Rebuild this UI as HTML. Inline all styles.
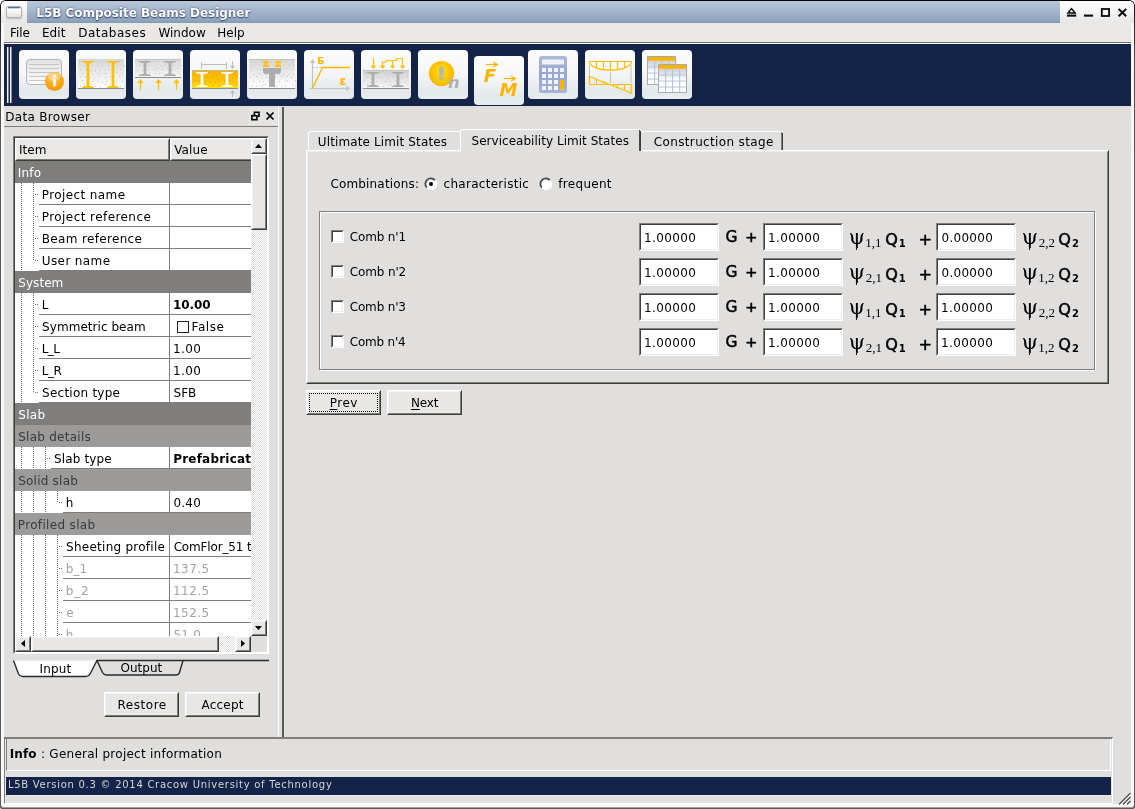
<!DOCTYPE html>
<html><head><meta charset="utf-8"><title>L5B Composite Beams Designer</title>
<style>
*{box-sizing:border-box;margin:0;padding:0}
html,body{width:1135px;height:809px;overflow:hidden;background:#fff}
body{font-family:"DejaVu Sans","Liberation Sans",sans-serif;font-size:12px;color:#000;position:relative}
.a{position:absolute}
.t{position:absolute;white-space:nowrap;line-height:14px;height:14px}
.b{font-weight:bold}
svg{position:absolute;overflow:visible}
</style></head>
<body>
<div id="w" class="a" style="left:0;top:0;width:1135px;height:809px;will-change:transform">
<div class="a" style="left:0px;top:0px;width:1135px;height:809px;background:linear-gradient(#000 0,#1c1c1c 12px,#4a4a4a 60px,#5a5a5a 160px,#5a5a5a 100%);border-radius:6px 6px 2px 2px"></div>
<div class="a" style="left:1px;top:1px;width:1133px;height:806px;background:#f8f8f8;border-radius:5px 5px 2px 2px"></div>
<div class="a" style="left:2px;top:807px;width:1131px;height:1px;background:#a0a0a0"></div>
<div class="a" style="left:4px;top:23px;width:1127px;height:781px;background:#e0dfde"></div>
<div class="a" style="left:1px;top:1px;width:1133px;height:22px;background:linear-gradient(#fdfdfd,#f4f4f4 50%,#e6e6e5);border-radius:5px 5px 0 0"></div>
<div class="a" style="left:27px;top:1px;width:1033px;height:22px;background:linear-gradient(#b9c8da,#8fa3bf 90%,#8498b4)"></div>
<div class="a" style="left:6px;top:6px;width:16px;height:12px;background:linear-gradient(#fff 25%,#dfe2dc);border:1px solid #b0b0b0;border-radius:2px;box-shadow:0 1px 2px rgba(0,0,0,.22)"></div>
<div class="a" style="left:8px;top:7px;width:12px;height:1px;background:#4f74ad"></div>
<div class="a" style="left:8px;top:8px;width:12px;height:1px;background:#c5d3ea"></div>
<div class="t" style="left:36.29px;top:5.85px;font-weight:bold;letter-spacing:-0.027px;color:#fff;text-shadow:0 0 2px #3a4d6e,0 1px 1px #3a4d6e">L5B Composite Beams Designer</div>
<svg style="left:1064px;top:3px" width="70" height="18" viewBox="0 0 70 18"><g fill="none" stroke="#0c0c0c">
<path d="M4 10 L7.550 5.600 L11.100 10 Z" stroke-width="1.500"/><path d="M2.900 12.600 H12.200" stroke-width="2.100"/>
<path d="M19.900 12.600 H29.100" stroke-width="2.100"/>
<rect x="37.800" y="6" width="7.300" height="7" stroke-width="1.800"/>
<path d="M54.600 5.900 L62.200 13.200 M62.200 5.900 L54.600 13.200" stroke-width="2"/></g></svg>
<div class="a" style="left:4px;top:23px;width:1127px;height:19px;background:#e9e8e6"></div>
<div class="t" style="left:9.93px;top:25.85px;letter-spacing:-0.025px;">File</div>
<div class="t" style="left:41.93px;top:25.85px;letter-spacing:0.072px;">Edit</div>
<div class="t" style="left:78.23px;top:25.85px;letter-spacing:0.493px;">Databases</div>
<div class="t" style="left:158.39px;top:25.85px;">Window</div>
<div class="t" style="left:217.13px;top:25.85px;letter-spacing:0.054px;">Help</div>
<div class="a" style="left:4px;top:42px;width:1127px;height:1px;background:#6e6d6c"></div>
<div class="a" style="left:4px;top:43px;width:1127px;height:1px;background:#fff"></div>
<div class="a" style="left:4px;top:44px;width:1127px;height:62px;background:#142448"></div>
<div class="a" style="left:7px;top:47px;width:2px;height:56px;background:#f4f4f4;border-right:1px solid #8a8a8a"></div>
<div class="a" style="left:10px;top:47px;width:2px;height:56px;background:#f4f4f4;border-right:1px solid #8a8a8a"></div>
<div class="a" style="left:19px;top:50px;width:50px;height:49px;background:linear-gradient(#fcfcfc,#f4f5f6 50%,#e3e9eb 82%,#e7ecee);border-radius:4px"></div>
<svg style="left:19px;top:50px" width="50" height="49" viewBox="0 0 50 49"><defs><linearGradient id="cg" x1="0" y1="0" x2="0" y2="1"><stop offset="0" stop-color="#e2e2e2"/><stop offset="1" stop-color="#fbfbfb"/></linearGradient>
<radialGradient id="og" cx="0.45" cy="0.3" r="0.75"><stop offset="0" stop-color="#ffd27a"/><stop offset="0.55" stop-color="#ffa915"/><stop offset="1" stop-color="#f39200"/></radialGradient></defs>
<rect x="7.500" y="9.500" width="35" height="25" rx="3.500" fill="url(#cg)" stroke="#b4b4b4"/>
<path d="M10 14.500 H40 M10 18.500 H40 M10 22.500 H40 M10 26.500 H40 M10 30.500 H32" stroke="#c6c6c6" stroke-width="1"/>
<circle cx="35.500" cy="31.500" r="9.500" fill="url(#og)"/>
<ellipse cx="35.500" cy="26.500" rx="7" ry="4" fill="#fff" opacity="0.28"/>
<circle cx="35.500" cy="26.300" r="1.500" fill="#fff"/><rect x="34.100" y="28.800" width="2.800" height="7.700" rx="0.800" fill="#fff"/></svg>
<div class="a" style="left:76px;top:50px;width:50px;height:49px;background:linear-gradient(#fcfcfc,#f4f5f6 50%,#e3e9eb 82%,#e7ecee);border-radius:4px"></div>
<svg style="left:76px;top:50px" width="50" height="49" viewBox="0 0 50 49"><defs><linearGradient id="s1" x1="0" y1="0" x2="0" y2="1"><stop offset="0" stop-color="#d6d6d6"/><stop offset="1" stop-color="#ffffff"/></linearGradient></defs><rect x="2" y="9" width="46" height="29" fill="url(#s1)"/><rect x="3" y="10" width="1" height="1" fill="#c4c4c4"/><rect x="8" y="11" width="1" height="1" fill="#c4c4c4"/><rect x="14" y="11" width="1" height="1" fill="#c4c4c4"/><rect x="19" y="11" width="1" height="1" fill="#c4c4c4"/><rect x="23" y="11" width="1" height="1" fill="#c4c4c4"/><rect x="30" y="12" width="1" height="1" fill="#c4c4c4"/><rect x="34" y="12" width="1" height="1" fill="#c4c4c4"/><rect x="39" y="10" width="1" height="1" fill="#c4c4c4"/><rect x="43" y="11" width="1" height="1" fill="#c4c4c4"/><rect x="8" y="15" width="1" height="1" fill="#c4c4c4"/><rect x="12" y="16" width="1" height="1" fill="#c4c4c4"/><rect x="16" y="15" width="1" height="1" fill="#c4c4c4"/><rect x="22" y="15" width="1" height="1" fill="#c4c4c4"/><rect x="26" y="15" width="1" height="1" fill="#c4c4c4"/><rect x="32" y="15" width="1" height="1" fill="#c4c4c4"/><rect x="36" y="15" width="1" height="1" fill="#c4c4c4"/><rect x="42" y="16" width="1" height="1" fill="#c4c4c4"/><rect x="48" y="15" width="1" height="1" fill="#c4c4c4"/><rect x="4" y="19" width="1" height="1" fill="#c4c4c4"/><rect x="10" y="19" width="1" height="1" fill="#c4c4c4"/><rect x="15" y="20" width="1" height="1" fill="#c4c4c4"/><rect x="19" y="20" width="1" height="1" fill="#c4c4c4"/><rect x="24" y="20" width="1" height="1" fill="#c4c4c4"/><rect x="29" y="20" width="1" height="1" fill="#c4c4c4"/><rect x="35" y="19" width="1" height="1" fill="#c4c4c4"/><rect x="40" y="20" width="1" height="1" fill="#c4c4c4"/><rect x="44" y="19" width="1" height="1" fill="#c4c4c4"/><rect x="6" y="23" width="1" height="1" fill="#c4c4c4"/><rect x="12" y="23" width="1" height="1" fill="#c4c4c4"/><rect x="16" y="24" width="1" height="1" fill="#c4c4c4"/><rect x="22" y="23" width="1" height="1" fill="#c4c4c4"/><rect x="28" y="23" width="1" height="1" fill="#c4c4c4"/><rect x="30" y="23" width="1" height="1" fill="#c4c4c4"/><rect x="36" y="23" width="1" height="1" fill="#c4c4c4"/><rect x="40" y="22" width="1" height="1" fill="#c4c4c4"/><rect x="46" y="23" width="1" height="1" fill="#c4c4c4"/><rect x="4" y="26" width="1" height="1" fill="#c4c4c4"/><rect x="9" y="27" width="1" height="1" fill="#c4c4c4"/><rect x="14" y="27" width="1" height="1" fill="#c4c4c4"/><rect x="18" y="28" width="1" height="1" fill="#c4c4c4"/><rect x="23" y="26" width="1" height="1" fill="#c4c4c4"/><rect x="29" y="27" width="1" height="1" fill="#c4c4c4"/><rect x="34" y="27" width="1" height="1" fill="#c4c4c4"/><rect x="38" y="26" width="1" height="1" fill="#c4c4c4"/><rect x="43" y="26" width="1" height="1" fill="#c4c4c4"/><rect x="6" y="30" width="1" height="1" fill="#c4c4c4"/><rect x="10" y="31" width="1" height="1" fill="#c4c4c4"/><rect x="16" y="31" width="1" height="1" fill="#c4c4c4"/><rect x="22" y="31" width="1" height="1" fill="#c4c4c4"/><rect x="26" y="32" width="1" height="1" fill="#c4c4c4"/><rect x="30" y="31" width="1" height="1" fill="#c4c4c4"/><rect x="36" y="30" width="1" height="1" fill="#c4c4c4"/><rect x="40" y="31" width="1" height="1" fill="#c4c4c4"/><rect x="46" y="31" width="1" height="1" fill="#c4c4c4"/><rect x="4" y="36" width="1" height="1" fill="#c4c4c4"/><rect x="8" y="35" width="1" height="1" fill="#c4c4c4"/><rect x="15" y="34" width="1" height="1" fill="#c4c4c4"/><rect x="19" y="36" width="1" height="1" fill="#c4c4c4"/><rect x="24" y="36" width="1" height="1" fill="#c4c4c4"/><rect x="29" y="34" width="1" height="1" fill="#c4c4c4"/><rect x="34" y="34" width="1" height="1" fill="#c4c4c4"/><rect x="38" y="36" width="1" height="1" fill="#c4c4c4"/><rect x="44" y="36" width="1" height="1" fill="#c4c4c4"/><path d="M6 11 H18 V11.96 L14.60 13.00 H13.40 V36.00 H14.60 L18 37.04 V38 H6 V37.04 L9.40 36.00 H10.60 V13.00 H9.40 L6 11.96 Z" fill="#ffc000"/><path d="M31 11 H43 V11.96 L39.60 13.00 H38.40 V36.00 H39.60 L43 37.04 V38 H31 V37.04 L34.40 36.00 H35.60 V13.00 H34.40 L31 11.96 Z" fill="#ffc000"/><rect x="2" y="38" width="46" height="1" fill="#8c8c8c"/></svg>
<div class="a" style="left:133px;top:50px;width:50px;height:49px;background:linear-gradient(#fcfcfc,#f4f5f6 50%,#e3e9eb 82%,#e7ecee);border-radius:4px"></div>
<svg style="left:133px;top:50px" width="50" height="49" viewBox="0 0 50 49"><defs><linearGradient id="s2" x1="0" y1="0" x2="0" y2="1"><stop offset="0" stop-color="#d8d8d8"/><stop offset="1" stop-color="#f4f4f4"/></linearGradient></defs><rect x="2" y="9" width="46" height="18" fill="url(#s2)"/><rect x="2" y="9" width="46" height="1" fill="#c4c4c4"/><rect x="4" y="11" width="1" height="1" fill="#c4c4c4"/><rect x="9" y="12" width="1" height="1" fill="#c4c4c4"/><rect x="13" y="10" width="1" height="1" fill="#c4c4c4"/><rect x="20" y="11" width="1" height="1" fill="#c4c4c4"/><rect x="24" y="11" width="1" height="1" fill="#c4c4c4"/><rect x="30" y="12" width="1" height="1" fill="#c4c4c4"/><rect x="35" y="11" width="1" height="1" fill="#c4c4c4"/><rect x="39" y="11" width="1" height="1" fill="#c4c4c4"/><rect x="45" y="10" width="1" height="1" fill="#c4c4c4"/><rect x="6" y="15" width="1" height="1" fill="#c4c4c4"/><rect x="10" y="15" width="1" height="1" fill="#c4c4c4"/><rect x="16" y="15" width="1" height="1" fill="#c4c4c4"/><rect x="22" y="16" width="1" height="1" fill="#c4c4c4"/><rect x="28" y="16" width="1" height="1" fill="#c4c4c4"/><rect x="32" y="15" width="1" height="1" fill="#c4c4c4"/><rect x="36" y="14" width="1" height="1" fill="#c4c4c4"/><rect x="40" y="15" width="1" height="1" fill="#c4c4c4"/><rect x="48" y="15" width="1" height="1" fill="#c4c4c4"/><rect x="4" y="20" width="1" height="1" fill="#c4c4c4"/><rect x="9" y="20" width="1" height="1" fill="#c4c4c4"/><rect x="15" y="19" width="1" height="1" fill="#c4c4c4"/><rect x="20" y="19" width="1" height="1" fill="#c4c4c4"/><rect x="24" y="18" width="1" height="1" fill="#c4c4c4"/><rect x="29" y="19" width="1" height="1" fill="#c4c4c4"/><rect x="34" y="18" width="1" height="1" fill="#c4c4c4"/><rect x="39" y="19" width="1" height="1" fill="#c4c4c4"/><rect x="44" y="18" width="1" height="1" fill="#c4c4c4"/><rect x="6" y="24" width="1" height="1" fill="#c4c4c4"/><rect x="12" y="22" width="1" height="1" fill="#c4c4c4"/><rect x="16" y="22" width="1" height="1" fill="#c4c4c4"/><rect x="22" y="23" width="1" height="1" fill="#c4c4c4"/><rect x="26" y="23" width="1" height="1" fill="#c4c4c4"/><rect x="32" y="24" width="1" height="1" fill="#c4c4c4"/><rect x="36" y="22" width="1" height="1" fill="#c4c4c4"/><rect x="40" y="24" width="1" height="1" fill="#c4c4c4"/><rect x="46" y="23" width="1" height="1" fill="#c4c4c4"/><path d="M6 11 H18 V11.96 L14.60 13.00 H13.40 V24.00 H14.60 L18 25.04 V26 H6 V25.04 L9.40 24.00 H10.60 V13.00 H9.40 L6 11.96 Z" fill="#aeaeae"/><path d="M31 11 H43 V11.96 L39.60 13.00 H38.40 V24.00 H39.60 L43 25.04 V26 H31 V25.04 L34.40 24.00 H35.60 V13.00 H34.40 L31 11.96 Z" fill="#aeaeae"/><rect x="2" y="27" width="46" height="1" fill="#8c8c8c"/><path d="M7.5 40 V30" stroke="#ffc000" stroke-width="1.3" fill="none"/><path d="M4.3 33 L7.5 29 L10.7 33 Z" fill="#ffc000"/><path d="M25.5 40 V30" stroke="#ffc000" stroke-width="1.3" fill="none"/><path d="M22.3 33 L25.5 29 L28.7 33 Z" fill="#ffc000"/><path d="M43.5 40 V30" stroke="#ffc000" stroke-width="1.3" fill="none"/><path d="M40.3 33 L43.5 29 L46.7 33 Z" fill="#ffc000"/></svg>
<div class="a" style="left:190px;top:50px;width:50px;height:49px;background:linear-gradient(#fcfcfc,#f4f5f6 50%,#e3e9eb 82%,#e7ecee);border-radius:4px"></div>
<svg style="left:190px;top:50px" width="50" height="49" viewBox="0 0 50 49"><defs><linearGradient id="s3" x1="0" y1="0" x2="0" y2="1"><stop offset="0" stop-color="#ffb200"/><stop offset="0.6" stop-color="#ffc400"/><stop offset="1" stop-color="#ffe000"/></linearGradient></defs>
<rect x="2" y="21" width="46" height="17" fill="url(#s3)"/><rect x="2" y="20" width="46" height="1" fill="#b8b8b8"/><rect x="2" y="38" width="46" height="1" fill="#8c8c8c"/><rect x="4" y="23" width="1" height="1" fill="#dba000"/><rect x="8" y="24" width="1" height="1" fill="#dba000"/><rect x="15" y="23" width="1" height="1" fill="#dba000"/><rect x="18" y="22" width="1" height="1" fill="#dba000"/><rect x="23" y="24" width="1" height="1" fill="#dba000"/><rect x="29" y="22" width="1" height="1" fill="#dba000"/><rect x="34" y="23" width="1" height="1" fill="#dba000"/><rect x="39" y="23" width="1" height="1" fill="#dba000"/><rect x="43" y="23" width="1" height="1" fill="#dba000"/><rect x="6" y="26" width="1" height="1" fill="#dba000"/><rect x="12" y="27" width="1" height="1" fill="#dba000"/><rect x="16" y="27" width="1" height="1" fill="#dba000"/><rect x="22" y="27" width="1" height="1" fill="#dba000"/><rect x="26" y="26" width="1" height="1" fill="#dba000"/><rect x="32" y="28" width="1" height="1" fill="#dba000"/><rect x="36" y="27" width="1" height="1" fill="#dba000"/><rect x="42" y="28" width="1" height="1" fill="#dba000"/><rect x="46" y="26" width="1" height="1" fill="#dba000"/><rect x="4" y="30" width="1" height="1" fill="#dba000"/><rect x="9" y="31" width="1" height="1" fill="#dba000"/><rect x="14" y="32" width="1" height="1" fill="#dba000"/><rect x="20" y="31" width="1" height="1" fill="#dba000"/><rect x="25" y="32" width="1" height="1" fill="#dba000"/><rect x="29" y="31" width="1" height="1" fill="#dba000"/><rect x="34" y="31" width="1" height="1" fill="#dba000"/><rect x="38" y="30" width="1" height="1" fill="#dba000"/><rect x="43" y="32" width="1" height="1" fill="#dba000"/><rect x="6" y="36" width="1" height="1" fill="#dba000"/><rect x="12" y="35" width="1" height="1" fill="#dba000"/><rect x="16" y="34" width="1" height="1" fill="#dba000"/><rect x="22" y="35" width="1" height="1" fill="#dba000"/><rect x="28" y="35" width="1" height="1" fill="#dba000"/><rect x="32" y="35" width="1" height="1" fill="#dba000"/><rect x="38" y="35" width="1" height="1" fill="#dba000"/><rect x="42" y="35" width="1" height="1" fill="#dba000"/><rect x="46" y="34" width="1" height="1" fill="#dba000"/><path d="M6 22 H18 V22.96 L14.60 24.00 H13.40 V35.00 H14.60 L18 36.04 V37 H6 V36.04 L9.40 35.00 H10.60 V24.00 H9.40 L6 22.96 Z" fill="#fff"/><path d="M31 22 H43 V22.96 L39.60 24.00 H38.40 V35.00 H39.60 L43 36.04 V37 H31 V36.04 L34.40 35.00 H35.60 V24.00 H34.40 L31 22.96 Z" fill="#fff"/><path d="M11.500 12 V19 M36.500 12 V19 M11.500 14.500 H36.500" stroke="#bdbdbd" stroke-width="1" fill="none"/><path d="M42.5 11 V18" stroke="#bdbdbd" stroke-width="1" fill="none"/><path d="M39.9 15.8 L42.5 19 L45.1 15.8 Z" fill="#bdbdbd"/><path d="M42.5 47 V41" stroke="#bdbdbd" stroke-width="1" fill="none"/><path d="M39.9 43.2 L42.5 40 L45.1 43.2 Z" fill="#bdbdbd"/></svg>
<div class="a" style="left:247px;top:50px;width:50px;height:49px;background:linear-gradient(#fcfcfc,#f4f5f6 50%,#e3e9eb 82%,#e7ecee);border-radius:4px"></div>
<svg style="left:247px;top:50px" width="50" height="49" viewBox="0 0 50 49"><defs><linearGradient id="s4" x1="0" y1="0" x2="0" y2="1"><stop offset="0" stop-color="#d6d6d6"/><stop offset="1" stop-color="#ffffff"/></linearGradient></defs><rect x="2" y="9" width="46" height="29" fill="url(#s4)"/><rect x="2" y="9" width="46" height="1" fill="#c4c4c4"/><rect x="4" y="11" width="1" height="1" fill="#c4c4c4"/><rect x="8" y="12" width="1" height="1" fill="#c4c4c4"/><rect x="14" y="10" width="1" height="1" fill="#c4c4c4"/><rect x="19" y="10" width="1" height="1" fill="#c4c4c4"/><rect x="24" y="12" width="1" height="1" fill="#c4c4c4"/><rect x="29" y="12" width="1" height="1" fill="#c4c4c4"/><rect x="33" y="11" width="1" height="1" fill="#c4c4c4"/><rect x="38" y="11" width="1" height="1" fill="#c4c4c4"/><rect x="45" y="11" width="1" height="1" fill="#c4c4c4"/><rect x="6" y="16" width="1" height="1" fill="#c4c4c4"/><rect x="12" y="14" width="1" height="1" fill="#c4c4c4"/><rect x="16" y="16" width="1" height="1" fill="#c4c4c4"/><rect x="22" y="15" width="1" height="1" fill="#c4c4c4"/><rect x="26" y="14" width="1" height="1" fill="#c4c4c4"/><rect x="32" y="15" width="1" height="1" fill="#c4c4c4"/><rect x="36" y="15" width="1" height="1" fill="#c4c4c4"/><rect x="42" y="15" width="1" height="1" fill="#c4c4c4"/><rect x="46" y="15" width="1" height="1" fill="#c4c4c4"/><rect x="4" y="19" width="1" height="1" fill="#c4c4c4"/><rect x="10" y="19" width="1" height="1" fill="#c4c4c4"/><rect x="13" y="19" width="1" height="1" fill="#c4c4c4"/><rect x="20" y="19" width="1" height="1" fill="#c4c4c4"/><rect x="24" y="19" width="1" height="1" fill="#c4c4c4"/><rect x="28" y="19" width="1" height="1" fill="#c4c4c4"/><rect x="34" y="18" width="1" height="1" fill="#c4c4c4"/><rect x="39" y="18" width="1" height="1" fill="#c4c4c4"/><rect x="44" y="19" width="1" height="1" fill="#c4c4c4"/><rect x="6" y="24" width="1" height="1" fill="#c4c4c4"/><rect x="12" y="23" width="1" height="1" fill="#c4c4c4"/><rect x="18" y="24" width="1" height="1" fill="#c4c4c4"/><rect x="22" y="22" width="1" height="1" fill="#c4c4c4"/><rect x="26" y="22" width="1" height="1" fill="#c4c4c4"/><rect x="32" y="24" width="1" height="1" fill="#c4c4c4"/><rect x="36" y="24" width="1" height="1" fill="#c4c4c4"/><rect x="42" y="24" width="1" height="1" fill="#c4c4c4"/><rect x="46" y="24" width="1" height="1" fill="#c4c4c4"/><rect x="3" y="27" width="1" height="1" fill="#c4c4c4"/><rect x="9" y="26" width="1" height="1" fill="#c4c4c4"/><rect x="14" y="28" width="1" height="1" fill="#c4c4c4"/><rect x="19" y="27" width="1" height="1" fill="#c4c4c4"/><rect x="24" y="28" width="1" height="1" fill="#c4c4c4"/><rect x="28" y="27" width="1" height="1" fill="#c4c4c4"/><rect x="34" y="26" width="1" height="1" fill="#c4c4c4"/><rect x="40" y="26" width="1" height="1" fill="#c4c4c4"/><rect x="44" y="27" width="1" height="1" fill="#c4c4c4"/><rect x="6" y="31" width="1" height="1" fill="#c4c4c4"/><rect x="12" y="31" width="1" height="1" fill="#c4c4c4"/><rect x="16" y="31" width="1" height="1" fill="#c4c4c4"/><rect x="22" y="31" width="1" height="1" fill="#c4c4c4"/><rect x="26" y="30" width="1" height="1" fill="#c4c4c4"/><rect x="32" y="31" width="1" height="1" fill="#c4c4c4"/><rect x="38" y="31" width="1" height="1" fill="#c4c4c4"/><rect x="40" y="30" width="1" height="1" fill="#c4c4c4"/><rect x="48" y="30" width="1" height="1" fill="#c4c4c4"/><rect x="4" y="35" width="1" height="1" fill="#c4c4c4"/><rect x="9" y="36" width="1" height="1" fill="#c4c4c4"/><rect x="15" y="35" width="1" height="1" fill="#c4c4c4"/><rect x="18" y="34" width="1" height="1" fill="#c4c4c4"/><rect x="25" y="35" width="1" height="1" fill="#c4c4c4"/><rect x="29" y="35" width="1" height="1" fill="#c4c4c4"/><rect x="34" y="36" width="1" height="1" fill="#c4c4c4"/><rect x="38" y="35" width="1" height="1" fill="#c4c4c4"/><rect x="45" y="35" width="1" height="1" fill="#c4c4c4"/><path d="M16 18 H34 V21 Q34 24 31 24 H28 V37 H22 V24 H19 Q16 24 16 21 Z" fill="#adadad"/><path d="M16 11 H22 V13 H20.300 V15 H22 V17 H16 V15 H17.700 V13 H16 Z M28 11 H34 V13 H32.300 V15 H34 V17 H28 V15 H29.700 V13 H28 Z" fill="#ffc000"/><rect x="2" y="38" width="46" height="1" fill="#8c8c8c"/></svg>
<div class="a" style="left:304px;top:50px;width:50px;height:49px;background:linear-gradient(#fcfcfc,#f4f5f6 50%,#e3e9eb 82%,#e7ecee);border-radius:4px"></div>
<svg style="left:304px;top:50px" width="50" height="49" viewBox="0 0 50 49"><path d="M8.500 38.500 V11 M5 38.500 H44" stroke="#c2c2c2" stroke-width="1.200" fill="none"/>
<path d="M5.800 13 L8.500 9 L11.200 13 Z M42 35.800 L46 38.500 L42 41.200 Z" fill="#c2c2c2"/>
<path d="M8.500 17.500 H18" stroke="#c2c2c2" stroke-width="1" stroke-dasharray="2 1.500"/>
<path d="M8.500 38.500 L18.500 17.500 H46" stroke="#ffb400" stroke-width="1.300" fill="none"/>
<text x="13" y="13.500" font-family="DejaVu Sans,Liberation Sans,sans-serif" font-weight="bold" font-size="9.500" fill="#ffb400">Б</text>
<text x="35.500" y="34.500" font-family="DejaVu Sans,Liberation Sans,sans-serif" font-weight="bold" font-size="12" fill="#ffb400">ε</text></svg>
<div class="a" style="left:361px;top:50px;width:50px;height:49px;background:linear-gradient(#fcfcfc,#f4f5f6 50%,#e3e9eb 82%,#e7ecee);border-radius:4px"></div>
<svg style="left:361px;top:50px" width="50" height="49" viewBox="0 0 50 49"><defs><linearGradient id="s6" x1="0" y1="0" x2="0" y2="1"><stop offset="0" stop-color="#d2d2d2"/><stop offset="1" stop-color="#f6f6f6"/></linearGradient></defs><rect x="2" y="21" width="46" height="17" fill="url(#s6)"/><rect x="2" y="20" width="46" height="1" fill="#c4c4c4"/><rect x="4" y="23" width="1" height="1" fill="#c4c4c4"/><rect x="10" y="22" width="1" height="1" fill="#c4c4c4"/><rect x="13" y="22" width="1" height="1" fill="#c4c4c4"/><rect x="19" y="22" width="1" height="1" fill="#c4c4c4"/><rect x="24" y="22" width="1" height="1" fill="#c4c4c4"/><rect x="28" y="24" width="1" height="1" fill="#c4c4c4"/><rect x="35" y="22" width="1" height="1" fill="#c4c4c4"/><rect x="39" y="22" width="1" height="1" fill="#c4c4c4"/><rect x="45" y="22" width="1" height="1" fill="#c4c4c4"/><rect x="6" y="27" width="1" height="1" fill="#c4c4c4"/><rect x="10" y="28" width="1" height="1" fill="#c4c4c4"/><rect x="16" y="27" width="1" height="1" fill="#c4c4c4"/><rect x="20" y="27" width="1" height="1" fill="#c4c4c4"/><rect x="26" y="28" width="1" height="1" fill="#c4c4c4"/><rect x="32" y="26" width="1" height="1" fill="#c4c4c4"/><rect x="36" y="27" width="1" height="1" fill="#c4c4c4"/><rect x="40" y="27" width="1" height="1" fill="#c4c4c4"/><rect x="46" y="26" width="1" height="1" fill="#c4c4c4"/><rect x="3" y="30" width="1" height="1" fill="#c4c4c4"/><rect x="9" y="32" width="1" height="1" fill="#c4c4c4"/><rect x="15" y="31" width="1" height="1" fill="#c4c4c4"/><rect x="20" y="32" width="1" height="1" fill="#c4c4c4"/><rect x="24" y="31" width="1" height="1" fill="#c4c4c4"/><rect x="29" y="31" width="1" height="1" fill="#c4c4c4"/><rect x="34" y="30" width="1" height="1" fill="#c4c4c4"/><rect x="39" y="32" width="1" height="1" fill="#c4c4c4"/><rect x="44" y="32" width="1" height="1" fill="#c4c4c4"/><rect x="6" y="34" width="1" height="1" fill="#c4c4c4"/><rect x="10" y="36" width="1" height="1" fill="#c4c4c4"/><rect x="16" y="35" width="1" height="1" fill="#c4c4c4"/><rect x="22" y="36" width="1" height="1" fill="#c4c4c4"/><rect x="28" y="34" width="1" height="1" fill="#c4c4c4"/><rect x="30" y="35" width="1" height="1" fill="#c4c4c4"/><rect x="36" y="35" width="1" height="1" fill="#c4c4c4"/><rect x="42" y="36" width="1" height="1" fill="#c4c4c4"/><rect x="46" y="34" width="1" height="1" fill="#c4c4c4"/><path d="M6 22 H18 V22.96 L14.60 24.00 H13.40 V35.00 H14.60 L18 36.04 V37 H6 V36.04 L9.40 35.00 H10.60 V24.00 H9.40 L6 22.96 Z" fill="#aeaeae"/><path d="M31 22 H43 V22.96 L39.60 24.00 H38.40 V35.00 H39.60 L43 36.04 V37 H31 V36.04 L34.40 35.00 H35.60 V24.00 H34.40 L31 22.96 Z" fill="#aeaeae"/><rect x="2" y="38" width="46" height="1" fill="#8c8c8c"/><path d="M12.5 8 V18" stroke="#ffc000" stroke-width="1.2" fill="none"/><path d="M9.7 15.5 L12.5 19 L15.3 15.5 Z" fill="#ffc000"/><path d="M21.5 12 V18" stroke="#ffc000" stroke-width="1.2" fill="none"/><path d="M18.7 15.5 L21.5 19 L24.3 15.5 Z" fill="#ffc000"/><path d="M31.5 10.5 V18" stroke="#ffc000" stroke-width="1.2" fill="none"/><path d="M28.7 15.5 L31.5 19 L34.3 15.5 Z" fill="#ffc000"/><path d="M41.5 8.5 V18" stroke="#ffc000" stroke-width="1.2" fill="none"/><path d="M38.7 15.5 L41.5 19 L44.3 15.5 Z" fill="#ffc000"/><path d="M21.500 13 V12 H25.500 V10.500 H35.500 V8.500 H41.500" stroke="#ffc000" stroke-width="1.200" fill="none"/></svg>
<div class="a" style="left:418px;top:50px;width:50px;height:49px;background:linear-gradient(#fcfcfc,#f4f5f6 50%,#e3e9eb 82%,#e7ecee);border-radius:4px"></div>
<svg style="left:418px;top:50px" width="50" height="49" viewBox="0 0 50 49"><defs><radialGradient id="wg" cx="0.5" cy="0.42" r="0.62"><stop offset="0" stop-color="#ffe400"/><stop offset="0.5" stop-color="#ffc800"/><stop offset="1" stop-color="#ffa400"/></radialGradient></defs>
<circle cx="23.500" cy="23.500" r="12.600" fill="url(#wg)"/>
<ellipse cx="23.500" cy="31.500" rx="8" ry="3.500" fill="#e6d200" opacity="0.55"/>
<rect x="21.300" y="16.700" width="4.400" height="9.500" rx="0.800" fill="#b6b6ba"/><rect x="21.300" y="27" width="4.400" height="2.600" rx="0.800" fill="#b6b6ba"/>
<text x="30" y="37.900" font-family="DejaVu Sans,Liberation Sans,sans-serif" font-weight="bold" font-style="italic" font-size="16.500" fill="#b0b0b0">n</text></svg>
<div class="a" style="left:474px;top:56px;width:50px;height:49px;background:linear-gradient(#fcfcfc,#f4f5f6 50%,#e3e9eb 82%,#e7ecee);border-radius:4px"></div>
<svg style="left:474px;top:56px" width="50" height="49" viewBox="0 0 50 49"><text x="9.800" y="25.700" font-family="DejaVu Sans,Liberation Sans,sans-serif" font-weight="bold" font-style="italic" font-size="18" fill="#ffb400">F</text>
<text x="25.500" y="40.200" font-family="DejaVu Sans,Liberation Sans,sans-serif" font-weight="bold" font-style="italic" font-size="18" fill="#ffb400">M</text>
<path d="M12 8.500 H23.500" stroke="#ffb400" stroke-width="1.200"/><path d="M19 6 L23.500 8.500 L19 11" fill="none" stroke="#ffb400" stroke-width="1.200"/>
<path d="M30 22.500 H41.500" stroke="#ffb400" stroke-width="1.200"/><path d="M37 20 L41.500 22.500 L37 25" fill="none" stroke="#ffb400" stroke-width="1.200"/></svg>
<div class="a" style="left:528px;top:50px;width:50px;height:49px;background:linear-gradient(#fcfcfc,#f4f5f6 50%,#e3e9eb 82%,#e7ecee);border-radius:4px"></div>
<svg style="left:528px;top:50px" width="50" height="49" viewBox="0 0 50 49"><defs><linearGradient id="kg" x1="0" y1="0" x2="0" y2="1"><stop offset="0" stop-color="#aebcdb"/><stop offset="0.5" stop-color="#94a6cf"/><stop offset="1" stop-color="#a6b4d6"/></linearGradient></defs>
<rect x="11" y="6" width="28" height="37" rx="2.500" fill="url(#kg)"/><rect x="14" y="9.500" width="22" height="5" fill="#eef1f7"/><rect x="14" y="18" width="4" height="4" fill="#f1f3f8"/><rect x="20" y="18" width="4" height="4" fill="#f1f3f8"/><rect x="26" y="18" width="4" height="4" fill="#f1f3f8"/><rect x="32" y="18" width="4" height="4" fill="#f1f3f8"/><rect x="14" y="24" width="4" height="4" fill="#f1f3f8"/><rect x="20" y="24" width="4" height="4" fill="#f1f3f8"/><rect x="26" y="24" width="4" height="4" fill="#f1f3f8"/><rect x="32" y="24" width="4" height="4" fill="#f1f3f8"/><rect x="14" y="30" width="4" height="4" fill="#f1f3f8"/><rect x="20" y="30" width="4" height="4" fill="#f1f3f8"/><rect x="26" y="30" width="4" height="4" fill="#f1f3f8"/><rect x="14" y="36" width="4" height="4" fill="#f1f3f8"/><rect x="20" y="36" width="4" height="4" fill="#f1f3f8"/><rect x="26" y="36" width="4" height="4" fill="#f1f3f8"/><rect x="32" y="30" width="4" height="10" fill="#ffb400"/></svg>
<div class="a" style="left:585px;top:50px;width:50px;height:49px;background:linear-gradient(#fcfcfc,#f4f5f6 50%,#e3e9eb 82%,#e7ecee);border-radius:4px"></div>
<svg style="left:585px;top:50px" width="50" height="49" viewBox="0 0 50 49"><path d="M4.500 15 V26 M25.500 22 V33 M46 15 V33" stroke="#c0c0c0" stroke-width="1"/>
<g stroke="#ffc000" stroke-width="1.200" fill="none"><path d="M4 11.500 H46.500 M4.500 11.500 A21 8.700 0 0 0 46.500 11.500"/><path d="M4.5 11.500 V11.5"/><path d="M11.5 11.500 V18.0"/><path d="M18.5 11.500 V19.7"/><path d="M25.5 11.500 V20.2"/><path d="M32.5 11.500 V19.7"/><path d="M39.5 11.500 V18.0"/><path d="M46.5 11.500 V11.5"/>
<path d="M4.500 26.500 L46.500 43 V34.500 H4.500 Z"/><path d="M4.5 34.500 V26.5"/><path d="M11.5 34.500 V29.2"/><path d="M18.5 34.500 V32.0"/><path d="M25.5 34.500 V34.8"/><path d="M32.5 34.500 V37.5"/><path d="M39.5 34.500 V40.2"/><path d="M46.5 34.500 V43.0"/></g></svg>
<div class="a" style="left:642px;top:50px;width:50px;height:49px;background:linear-gradient(#fcfcfc,#f4f5f6 50%,#e3e9eb 82%,#e7ecee);border-radius:4px"></div>
<svg style="left:642px;top:50px" width="50" height="49" viewBox="0 0 50 49"><defs><linearGradient id="tg" x1="0" y1="0" x2="0" y2="1"><stop offset="0" stop-color="#c9d3df"/><stop offset="1" stop-color="#ffffff"/></linearGradient></defs><rect x="5.5" y="6.5" width="28" height="28" fill="#fff" stroke="#ababab"/><rect x="6" y="7" width="27" height="3.500" fill="#ffb400"/><rect x="6" y="10.5" width="27" height="0.800" fill="#ff9800"/><rect x="6" y="11.3" width="27" height="11" fill="url(#tg)"/><rect x="12" y="11.3" width="1.200" height="22.700" fill="#b4c3d6" opacity="0.9"/><rect x="19" y="11.3" width="1.200" height="22.700" fill="#b4c3d6" opacity="0.9"/><rect x="26" y="11.3" width="1.200" height="22.700" fill="#b4c3d6" opacity="0.9"/><rect x="6" y="16.5" width="27" height="1.100" fill="#b4c3d6" opacity="0.9"/><rect x="6" y="22.5" width="27" height="1.100" fill="#b4c3d6" opacity="0.9"/><rect x="6" y="28.5" width="27" height="1.100" fill="#b4c3d6" opacity="0.9"/><rect x="16.5" y="14.5" width="28" height="28" fill="#fff" stroke="#ababab"/><rect x="17" y="15" width="27" height="3.500" fill="#ffb400"/><rect x="17" y="18.5" width="27" height="0.800" fill="#ff9800"/><rect x="17" y="19.3" width="27" height="11" fill="url(#tg)"/><rect x="23" y="19.3" width="1.200" height="22.700" fill="#b4c3d6" opacity="0.9"/><rect x="30" y="19.3" width="1.200" height="22.700" fill="#b4c3d6" opacity="0.9"/><rect x="37" y="19.3" width="1.200" height="22.700" fill="#b4c3d6" opacity="0.9"/><rect x="17" y="24.5" width="27" height="1.100" fill="#b4c3d6" opacity="0.9"/><rect x="17" y="30.5" width="27" height="1.100" fill="#b4c3d6" opacity="0.9"/><rect x="17" y="36.5" width="27" height="1.100" fill="#b4c3d6" opacity="0.9"/></svg>
<div class="t" style="left:5.23px;top:109.85px;letter-spacing:0.325px;">Data Browser</div>
<div class="a" style="left:248px;top:108px;width:14px;height:17px;background:#e5e4e3"></div>
<div class="a" style="left:263px;top:108px;width:14px;height:17px;background:#e5e4e3"></div>
<svg style="left:248px;top:108px" width="30" height="17" viewBox="0 0 30 17"><g fill="none" stroke="#000" stroke-width="1.6">
<rect x="3.900" y="7.700" width="5" height="4"/><path d="M6.400 6.900 V4.300 H11 V8.300 H9.700"/>
<path d="M18.500 4.500 L25.500 11.500 M25.500 4.500 L18.500 11.500" stroke-width="1.700"/></g></svg>
<div class="a" style="left:4px;top:126px;width:274px;height:1px;background:#7f7e7d"></div>
<div class="a" style="left:278px;top:107px;width:1px;height:630px;background:#fff"></div>
<div class="a" style="left:282px;top:107px;width:2px;height:630px;background:#5a5a59"></div>
<div class="a" style="left:13px;top:136px;width:256px;height:518px;background:#fff;border-top:1px solid #7f7e7d;border-left:1px solid #7f7e7d;border-right:1px solid #fff;border-bottom:1px solid #fff"><div class="a" style="left:0;top:0;right:0;bottom:0;border-left:1px solid #3e3e3d;border-top:1px solid #3e3e3d;border-right:1px solid #fff;border-bottom:1px solid #fff"></div></div>
<div class="a" style="left:15px;top:138px;width:155px;height:23px;background:#e9e8e6;border-top:1px solid #fff;border-left:1px solid #fff;border-right:1px solid #3e3e3d;border-bottom:1px solid #3e3e3d;"><div class="a" style="left:0;top:0;right:0;bottom:0;border-top:1px solid #f3f2f1;border-left:1px solid #f3f2f1;border-right:1px solid #7f7e7d;border-bottom:1px solid #7f7e7d"></div></div>
<div class="a" style="left:170px;top:138px;width:90px;height:23px;background:#e9e8e6;border-top:1px solid #fff;border-left:1px solid #fff;border-right:1px solid #3e3e3d;border-bottom:1px solid #3e3e3d;"><div class="a" style="left:0;top:0;right:0;bottom:0;border-top:1px solid #f3f2f1;border-left:1px solid #f3f2f1;border-right:1px solid #7f7e7d;border-bottom:1px solid #7f7e7d"></div></div>
<div class="t" style="left:19.03px;top:142.85px;letter-spacing:0.024px;">Item</div>
<div class="t" style="left:174.21px;top:142.85px;letter-spacing:0.118px;">Value</div>
<div class="a" style="left:15px;top:161px;width:236px;height:475px;overflow:hidden;background:#fff">
<div class="a" style="left:0px;top:0px;width:236px;height:22px;background:#7f7e7d"></div>
<div class="t" style="left:2.83px;top:4.85px;letter-spacing:0.172px;color:#fff">Info</div>
<div class="a" style="left:24px;top:43px;width:212px;height:1px;background:#7f7e7d"></div>
<div class="a" style="left:154px;top:22px;width:1px;height:22px;background:#7f7e7d"></div>
<div class="a" style="left:6px;top:22px;width:1px;height:22px;background-image:linear-gradient(#6a6a6a 50%,transparent 50%);background-size:1px 2px"></div>
<div class="a" style="left:18px;top:22px;width:1px;height:22px;background-image:linear-gradient(#6a6a6a 50%,transparent 50%);background-size:1px 2px"></div>
<div class="a" style="left:20px;top:33px;width:4px;height:1px;background-image:linear-gradient(90deg,#6a6a6a 50%,transparent 50%);background-size:2px 1px"></div>
<div class="t" style="left:26.73px;top:26.85px;letter-spacing:0.400px;color:#000">Project name</div>
<div class="a" style="left:24px;top:65px;width:212px;height:1px;background:#7f7e7d"></div>
<div class="a" style="left:154px;top:44px;width:1px;height:22px;background:#7f7e7d"></div>
<div class="a" style="left:6px;top:44px;width:1px;height:22px;background-image:linear-gradient(#6a6a6a 50%,transparent 50%);background-size:1px 2px"></div>
<div class="a" style="left:18px;top:44px;width:1px;height:22px;background-image:linear-gradient(#6a6a6a 50%,transparent 50%);background-size:1px 2px"></div>
<div class="a" style="left:20px;top:55px;width:4px;height:1px;background-image:linear-gradient(90deg,#6a6a6a 50%,transparent 50%);background-size:2px 1px"></div>
<div class="t" style="left:26.73px;top:48.85px;letter-spacing:0.433px;color:#000">Project reference</div>
<div class="a" style="left:24px;top:87px;width:212px;height:1px;background:#7f7e7d"></div>
<div class="a" style="left:154px;top:66px;width:1px;height:22px;background:#7f7e7d"></div>
<div class="a" style="left:6px;top:66px;width:1px;height:22px;background-image:linear-gradient(#6a6a6a 50%,transparent 50%);background-size:1px 2px"></div>
<div class="a" style="left:18px;top:66px;width:1px;height:22px;background-image:linear-gradient(#6a6a6a 50%,transparent 50%);background-size:1px 2px"></div>
<div class="a" style="left:20px;top:77px;width:4px;height:1px;background-image:linear-gradient(90deg,#6a6a6a 50%,transparent 50%);background-size:2px 1px"></div>
<div class="t" style="left:26.73px;top:70.85px;letter-spacing:0.341px;color:#000">Beam reference</div>
<div class="a" style="left:24px;top:109px;width:212px;height:1px;background:#7f7e7d"></div>
<div class="a" style="left:154px;top:88px;width:1px;height:22px;background:#7f7e7d"></div>
<div class="a" style="left:6px;top:88px;width:1px;height:22px;background-image:linear-gradient(#6a6a6a 50%,transparent 50%);background-size:1px 2px"></div>
<div class="a" style="left:18px;top:88px;width:1px;height:11px;background-image:linear-gradient(#6a6a6a 50%,transparent 50%);background-size:1px 2px"></div>
<div class="a" style="left:20px;top:99px;width:4px;height:1px;background-image:linear-gradient(90deg,#6a6a6a 50%,transparent 50%);background-size:2px 1px"></div>
<div class="t" style="left:26.85px;top:92.85px;letter-spacing:0.373px;color:#000">User name</div>
<div class="a" style="left:0px;top:110px;width:236px;height:22px;background:#7f7e7d"></div>
<div class="t" style="left:3.20px;top:114.85px;letter-spacing:0.073px;color:#fff">System</div>
<div class="a" style="left:24px;top:153px;width:212px;height:1px;background:#7f7e7d"></div>
<div class="a" style="left:154px;top:132px;width:1px;height:22px;background:#7f7e7d"></div>
<div class="a" style="left:6px;top:132px;width:1px;height:22px;background-image:linear-gradient(#6a6a6a 50%,transparent 50%);background-size:1px 2px"></div>
<div class="a" style="left:18px;top:132px;width:1px;height:22px;background-image:linear-gradient(#6a6a6a 50%,transparent 50%);background-size:1px 2px"></div>
<div class="a" style="left:20px;top:143px;width:4px;height:1px;background-image:linear-gradient(90deg,#6a6a6a 50%,transparent 50%);background-size:2px 1px"></div>
<div class="t" style="left:26.73px;top:136.85px;color:#000">L</div>
<div class="t" style="left:157.94px;top:136.85px;font-weight:bold;letter-spacing:-0.082px;color:#000">10.00</div>
<div class="a" style="left:24px;top:175px;width:212px;height:1px;background:#7f7e7d"></div>
<div class="a" style="left:154px;top:154px;width:1px;height:22px;background:#7f7e7d"></div>
<div class="a" style="left:6px;top:154px;width:1px;height:22px;background-image:linear-gradient(#6a6a6a 50%,transparent 50%);background-size:1px 2px"></div>
<div class="a" style="left:18px;top:154px;width:1px;height:22px;background-image:linear-gradient(#6a6a6a 50%,transparent 50%);background-size:1px 2px"></div>
<div class="a" style="left:20px;top:165px;width:4px;height:1px;background-image:linear-gradient(90deg,#6a6a6a 50%,transparent 50%);background-size:2px 1px"></div>
<div class="t" style="left:27.10px;top:158.85px;letter-spacing:0.047px;color:#000">Symmetric beam</div>
<div class="a" style="left:162px;top:160px;width:12px;height:12px;background:#fff;border:1px solid #222"></div>
<div class="t" style="left:176.53px;top:158.85px;letter-spacing:0.570px;">False</div>
<div class="a" style="left:24px;top:197px;width:212px;height:1px;background:#7f7e7d"></div>
<div class="a" style="left:154px;top:176px;width:1px;height:22px;background:#7f7e7d"></div>
<div class="a" style="left:6px;top:176px;width:1px;height:22px;background-image:linear-gradient(#6a6a6a 50%,transparent 50%);background-size:1px 2px"></div>
<div class="a" style="left:18px;top:176px;width:1px;height:22px;background-image:linear-gradient(#6a6a6a 50%,transparent 50%);background-size:1px 2px"></div>
<div class="a" style="left:20px;top:187px;width:4px;height:1px;background-image:linear-gradient(90deg,#6a6a6a 50%,transparent 50%);background-size:2px 1px"></div>
<div class="t" style="left:26.73px;top:180.85px;letter-spacing:-0.619px;color:#000">L_L</div>
<div class="t" style="left:157.99px;top:180.85px;letter-spacing:0.362px;color:#000">1.00</div>
<div class="a" style="left:24px;top:219px;width:212px;height:1px;background:#7f7e7d"></div>
<div class="a" style="left:154px;top:198px;width:1px;height:22px;background:#7f7e7d"></div>
<div class="a" style="left:6px;top:198px;width:1px;height:22px;background-image:linear-gradient(#6a6a6a 50%,transparent 50%);background-size:1px 2px"></div>
<div class="a" style="left:18px;top:198px;width:1px;height:22px;background-image:linear-gradient(#6a6a6a 50%,transparent 50%);background-size:1px 2px"></div>
<div class="a" style="left:20px;top:209px;width:4px;height:1px;background-image:linear-gradient(90deg,#6a6a6a 50%,transparent 50%);background-size:2px 1px"></div>
<div class="t" style="left:26.73px;top:202.85px;letter-spacing:-0.407px;color:#000">L_R</div>
<div class="t" style="left:157.99px;top:202.85px;letter-spacing:0.362px;color:#000">1.00</div>
<div class="a" style="left:24px;top:241px;width:212px;height:1px;background:#7f7e7d"></div>
<div class="a" style="left:154px;top:220px;width:1px;height:22px;background:#7f7e7d"></div>
<div class="a" style="left:6px;top:220px;width:1px;height:22px;background-image:linear-gradient(#6a6a6a 50%,transparent 50%);background-size:1px 2px"></div>
<div class="a" style="left:18px;top:220px;width:1px;height:11px;background-image:linear-gradient(#6a6a6a 50%,transparent 50%);background-size:1px 2px"></div>
<div class="a" style="left:20px;top:231px;width:4px;height:1px;background-image:linear-gradient(90deg,#6a6a6a 50%,transparent 50%);background-size:2px 1px"></div>
<div class="t" style="left:27.10px;top:224.85px;letter-spacing:0.239px;color:#000">Section type</div>
<div class="t" style="left:158.50px;top:224.85px;letter-spacing:0.043px;color:#000">SFB</div>
<div class="a" style="left:0px;top:242px;width:236px;height:22px;background:#7f7e7d"></div>
<div class="t" style="left:3.20px;top:246.85px;letter-spacing:0.341px;color:#fff">Slab</div>
<div class="a" style="left:0px;top:264px;width:236px;height:22px;background:#9c9b9a"></div>
<div class="t" style="left:3.20px;top:268.85px;letter-spacing:0.260px;color:#3a3a3a">Slab details</div>
<div class="a" style="left:36px;top:307px;width:200px;height:1px;background:#7f7e7d"></div>
<div class="a" style="left:154px;top:286px;width:1px;height:22px;background:#7f7e7d"></div>
<div class="a" style="left:6px;top:286px;width:1px;height:22px;background-image:linear-gradient(#6a6a6a 50%,transparent 50%);background-size:1px 2px"></div>
<div class="a" style="left:18px;top:286px;width:1px;height:22px;background-image:linear-gradient(#6a6a6a 50%,transparent 50%);background-size:1px 2px"></div>
<div class="a" style="left:30px;top:286px;width:1px;height:22px;background-image:linear-gradient(#6a6a6a 50%,transparent 50%);background-size:1px 2px"></div>
<div class="a" style="left:32px;top:297px;width:4px;height:1px;background-image:linear-gradient(90deg,#6a6a6a 50%,transparent 50%);background-size:2px 1px"></div>
<div class="t" style="left:39.10px;top:290.85px;letter-spacing:0.136px;color:#000">Slab type</div>
<div class="t" style="left:158.19px;top:290.85px;font-weight:bold;letter-spacing:0.214px;color:#000">Prefabricated</div>
<div class="a" style="left:0px;top:308px;width:236px;height:22px;background:#9c9b9a"></div>
<div class="t" style="left:3.20px;top:312.85px;letter-spacing:0.226px;color:#3a3a3a">Solid slab</div>
<div class="a" style="left:48px;top:351px;width:188px;height:1px;background:#7f7e7d"></div>
<div class="a" style="left:154px;top:330px;width:1px;height:22px;background:#7f7e7d"></div>
<div class="a" style="left:6px;top:330px;width:1px;height:22px;background-image:linear-gradient(#6a6a6a 50%,transparent 50%);background-size:1px 2px"></div>
<div class="a" style="left:18px;top:330px;width:1px;height:22px;background-image:linear-gradient(#6a6a6a 50%,transparent 50%);background-size:1px 2px"></div>
<div class="a" style="left:30px;top:330px;width:1px;height:22px;background-image:linear-gradient(#6a6a6a 50%,transparent 50%);background-size:1px 2px"></div>
<div class="a" style="left:42px;top:330px;width:1px;height:11px;background-image:linear-gradient(#6a6a6a 50%,transparent 50%);background-size:1px 2px"></div>
<div class="a" style="left:44px;top:341px;width:4px;height:1px;background-image:linear-gradient(90deg,#6a6a6a 50%,transparent 50%);background-size:2px 1px"></div>
<div class="t" style="left:50.81px;top:334.85px;color:#000">h</div>
<div class="t" style="left:158.50px;top:334.85px;letter-spacing:0.190px;color:#000">0.40</div>
<div class="a" style="left:0px;top:352px;width:236px;height:22px;background:#9c9b9a"></div>
<div class="t" style="left:2.83px;top:356.85px;letter-spacing:0.335px;color:#3a3a3a">Profiled slab</div>
<div class="a" style="left:48px;top:395px;width:188px;height:1px;background:#7f7e7d"></div>
<div class="a" style="left:154px;top:374px;width:1px;height:22px;background:#7f7e7d"></div>
<div class="a" style="left:6px;top:374px;width:1px;height:22px;background-image:linear-gradient(#6a6a6a 50%,transparent 50%);background-size:1px 2px"></div>
<div class="a" style="left:18px;top:374px;width:1px;height:22px;background-image:linear-gradient(#6a6a6a 50%,transparent 50%);background-size:1px 2px"></div>
<div class="a" style="left:30px;top:374px;width:1px;height:22px;background-image:linear-gradient(#6a6a6a 50%,transparent 50%);background-size:1px 2px"></div>
<div class="a" style="left:42px;top:374px;width:1px;height:22px;background-image:linear-gradient(#6a6a6a 50%,transparent 50%);background-size:1px 2px"></div>
<div class="a" style="left:44px;top:385px;width:4px;height:1px;background-image:linear-gradient(90deg,#6a6a6a 50%,transparent 50%);background-size:2px 1px"></div>
<div class="t" style="left:51.10px;top:378.85px;letter-spacing:0.257px;color:#000">Sheeting profile</div>
<div class="t" style="left:158.63px;top:378.85px;letter-spacing:-0.157px;color:#000">ComFlor_51 t=1.0</div>
<div class="a" style="left:48px;top:417px;width:188px;height:1px;background:#7f7e7d"></div>
<div class="a" style="left:154px;top:396px;width:1px;height:22px;background:#7f7e7d"></div>
<div class="a" style="left:6px;top:396px;width:1px;height:22px;background-image:linear-gradient(#6a6a6a 50%,transparent 50%);background-size:1px 2px"></div>
<div class="a" style="left:18px;top:396px;width:1px;height:22px;background-image:linear-gradient(#6a6a6a 50%,transparent 50%);background-size:1px 2px"></div>
<div class="a" style="left:30px;top:396px;width:1px;height:22px;background-image:linear-gradient(#6a6a6a 50%,transparent 50%);background-size:1px 2px"></div>
<div class="a" style="left:42px;top:396px;width:1px;height:22px;background-image:linear-gradient(#6a6a6a 50%,transparent 50%);background-size:1px 2px"></div>
<div class="a" style="left:44px;top:407px;width:4px;height:1px;background-image:linear-gradient(90deg,#6a6a6a 50%,transparent 50%);background-size:2px 1px"></div>
<div class="t" style="left:50.81px;top:400.85px;letter-spacing:0.073px;color:#a3a3a3">b_1</div>
<div class="t" style="left:157.99px;top:400.85px;letter-spacing:0.475px;color:#a3a3a3">137.5</div>
<div class="a" style="left:48px;top:439px;width:188px;height:1px;background:#7f7e7d"></div>
<div class="a" style="left:154px;top:418px;width:1px;height:22px;background:#7f7e7d"></div>
<div class="a" style="left:6px;top:418px;width:1px;height:22px;background-image:linear-gradient(#6a6a6a 50%,transparent 50%);background-size:1px 2px"></div>
<div class="a" style="left:18px;top:418px;width:1px;height:22px;background-image:linear-gradient(#6a6a6a 50%,transparent 50%);background-size:1px 2px"></div>
<div class="a" style="left:30px;top:418px;width:1px;height:22px;background-image:linear-gradient(#6a6a6a 50%,transparent 50%);background-size:1px 2px"></div>
<div class="a" style="left:42px;top:418px;width:1px;height:22px;background-image:linear-gradient(#6a6a6a 50%,transparent 50%);background-size:1px 2px"></div>
<div class="a" style="left:44px;top:429px;width:4px;height:1px;background-image:linear-gradient(90deg,#6a6a6a 50%,transparent 50%);background-size:2px 1px"></div>
<div class="t" style="left:50.81px;top:422.85px;letter-spacing:0.770px;color:#a3a3a3">b_2</div>
<div class="t" style="left:157.99px;top:422.85px;letter-spacing:0.475px;color:#a3a3a3">112.5</div>
<div class="a" style="left:48px;top:461px;width:188px;height:1px;background:#7f7e7d"></div>
<div class="a" style="left:154px;top:440px;width:1px;height:22px;background:#7f7e7d"></div>
<div class="a" style="left:6px;top:440px;width:1px;height:22px;background-image:linear-gradient(#6a6a6a 50%,transparent 50%);background-size:1px 2px"></div>
<div class="a" style="left:18px;top:440px;width:1px;height:22px;background-image:linear-gradient(#6a6a6a 50%,transparent 50%);background-size:1px 2px"></div>
<div class="a" style="left:30px;top:440px;width:1px;height:22px;background-image:linear-gradient(#6a6a6a 50%,transparent 50%);background-size:1px 2px"></div>
<div class="a" style="left:42px;top:440px;width:1px;height:22px;background-image:linear-gradient(#6a6a6a 50%,transparent 50%);background-size:1px 2px"></div>
<div class="a" style="left:44px;top:451px;width:4px;height:1px;background-image:linear-gradient(90deg,#6a6a6a 50%,transparent 50%);background-size:2px 1px"></div>
<div class="t" style="left:51.24px;top:444.85px;color:#a3a3a3">e</div>
<div class="t" style="left:157.99px;top:444.85px;letter-spacing:0.475px;color:#a3a3a3">152.5</div>
<div class="a" style="left:48px;top:483px;width:188px;height:1px;background:#7f7e7d"></div>
<div class="a" style="left:154px;top:462px;width:1px;height:22px;background:#7f7e7d"></div>
<div class="a" style="left:6px;top:462px;width:1px;height:22px;background-image:linear-gradient(#6a6a6a 50%,transparent 50%);background-size:1px 2px"></div>
<div class="a" style="left:18px;top:462px;width:1px;height:22px;background-image:linear-gradient(#6a6a6a 50%,transparent 50%);background-size:1px 2px"></div>
<div class="a" style="left:30px;top:462px;width:1px;height:22px;background-image:linear-gradient(#6a6a6a 50%,transparent 50%);background-size:1px 2px"></div>
<div class="a" style="left:42px;top:462px;width:1px;height:22px;background-image:linear-gradient(#6a6a6a 50%,transparent 50%);background-size:1px 2px"></div>
<div class="a" style="left:44px;top:473px;width:4px;height:1px;background-image:linear-gradient(90deg,#6a6a6a 50%,transparent 50%);background-size:2px 1px"></div>
<div class="t" style="left:50.81px;top:466.85px;color:#a3a3a3">h</div>
<div class="t" style="left:158.38px;top:466.85px;letter-spacing:0.231px;color:#a3a3a3">51.0</div>
</div>
<div class="a" style="left:251px;top:138px;width:16px;height:498px;background-color:#f0efee;background-image:conic-gradient(#fff 25%,#dddcda 0 50%,#fff 0 75%,#dddcda 0);background-size:2px 2px"></div>
<div class="a" style="left:251px;top:138px;width:16px;height:16px;background:#e8e7e5;border-top:1px solid #fff;border-left:1px solid #fff;border-right:1px solid #3e3e3d;border-bottom:1px solid #3e3e3d;"><div class="a" style="left:0;top:0;right:0;bottom:0;border-top:1px solid #f3f2f1;border-left:1px solid #f3f2f1;border-right:1px solid #7f7e7d;border-bottom:1px solid #7f7e7d"></div></div>
<div class="a" style="left:251px;top:154px;width:16px;height:76px;background:#e8e7e5;border-top:1px solid #fff;border-left:1px solid #fff;border-right:1px solid #3e3e3d;border-bottom:1px solid #3e3e3d;"><div class="a" style="left:0;top:0;right:0;bottom:0;border-top:1px solid #f3f2f1;border-left:1px solid #f3f2f1;border-right:1px solid #7f7e7d;border-bottom:1px solid #7f7e7d"></div></div>
<div class="a" style="left:251px;top:620px;width:16px;height:16px;background:#e8e7e5;border-top:1px solid #fff;border-left:1px solid #fff;border-right:1px solid #3e3e3d;border-bottom:1px solid #3e3e3d;"><div class="a" style="left:0;top:0;right:0;bottom:0;border-top:1px solid #f3f2f1;border-left:1px solid #f3f2f1;border-right:1px solid #7f7e7d;border-bottom:1px solid #7f7e7d"></div></div>
<svg style="left:251px;top:138px" width="16" height="16" viewBox="0 0 16 16"><path d="M4 10 L7.500 6 L11 10 Z" fill="#000"/></svg>
<svg style="left:251px;top:620px" width="16" height="16" viewBox="0 0 16 16"><path d="M4 6 L7.500 10 L11 6 Z" fill="#000"/></svg>
<div class="a" style="left:15px;top:636px;width:236px;height:16px;background-color:#f0efee;background-image:conic-gradient(#fff 25%,#dddcda 0 50%,#fff 0 75%,#dddcda 0);background-size:2px 2px"></div>
<div class="a" style="left:15px;top:636px;width:16px;height:16px;background:#e8e7e5;border-top:1px solid #fff;border-left:1px solid #fff;border-right:1px solid #3e3e3d;border-bottom:1px solid #3e3e3d;"><div class="a" style="left:0;top:0;right:0;bottom:0;border-top:1px solid #f3f2f1;border-left:1px solid #f3f2f1;border-right:1px solid #7f7e7d;border-bottom:1px solid #7f7e7d"></div></div>
<div class="a" style="left:31px;top:636px;width:188px;height:16px;background:#e8e7e5;border-top:1px solid #fff;border-left:1px solid #fff;border-right:1px solid #3e3e3d;border-bottom:1px solid #3e3e3d;"><div class="a" style="left:0;top:0;right:0;bottom:0;border-top:1px solid #f3f2f1;border-left:1px solid #f3f2f1;border-right:1px solid #7f7e7d;border-bottom:1px solid #7f7e7d"></div></div>
<div class="a" style="left:235px;top:636px;width:16px;height:16px;background:#e8e7e5;border-top:1px solid #fff;border-left:1px solid #fff;border-right:1px solid #3e3e3d;border-bottom:1px solid #3e3e3d;"><div class="a" style="left:0;top:0;right:0;bottom:0;border-top:1px solid #f3f2f1;border-left:1px solid #f3f2f1;border-right:1px solid #7f7e7d;border-bottom:1px solid #7f7e7d"></div></div>
<svg style="left:15px;top:636px" width="16" height="16" viewBox="0 0 16 16"><path d="M10 4 L6 7.500 L10 11 Z" fill="#000"/></svg>
<svg style="left:235px;top:636px" width="16" height="16" viewBox="0 0 16 16"><path d="M6 4 L10 7.500 L6 11 Z" fill="#000"/></svg>
<div class="a" style="left:251px;top:636px;width:16px;height:16px;background:#e0dfde"></div>
<svg style="left:10px;top:656px" width="262" height="24" viewBox="0 0 262 24"><path d="M3 4.500 L8 18 Q9.300 20.500 12 20.500 H76 Q78.700 20.500 80 18 L87 4.500 Z" fill="#fff"/>
<path d="M3.500 4.500 L8.500 18 Q9.800 20.500 12.500 20.500 H76 Q78.700 20.500 80 18 L87 4.500 H259" fill="none" stroke="#2a2a2a" stroke-width="1.400"/>
<path d="M87 4.500 L92.500 16.500 Q93.800 19 96.500 19 H166 Q168.700 19 169.500 16.500 L173 4.500" fill="none" stroke="#2a2a2a" stroke-width="1.400"/></svg>
<div class="t" style="left:39.53px;top:661.85px;letter-spacing:0.171px;">Input</div>
<div class="t" style="left:120.53px;top:660.85px;letter-spacing:0.014px;">Output</div>
<div class="a" style="left:104px;top:692px;width:75px;height:25px;background:#e8e7e5;border-top:1px solid #fff;border-left:1px solid #fff;border-right:1px solid #3e3e3d;border-bottom:1px solid #3e3e3d;"><div class="a" style="left:0;top:0;right:0;bottom:0;border-top:1px solid #f3f2f1;border-left:1px solid #f3f2f1;border-right:1px solid #7f7e7d;border-bottom:1px solid #7f7e7d"></div></div>
<div class="a" style="left:185px;top:692px;width:75px;height:25px;background:#e8e7e5;border-top:1px solid #fff;border-left:1px solid #fff;border-right:1px solid #3e3e3d;border-bottom:1px solid #3e3e3d;"><div class="a" style="left:0;top:0;right:0;bottom:0;border-top:1px solid #f3f2f1;border-left:1px solid #f3f2f1;border-right:1px solid #7f7e7d;border-bottom:1px solid #7f7e7d"></div></div>
<div class="t" style="left:117.43px;top:697.85px;letter-spacing:0.545px;">Restore</div>
<div class="t" style="left:201.51px;top:697.85px;letter-spacing:0.216px;">Accept</div>
<div class="a" style="left:306px;top:150px;width:803px;height:234px;border-top:1px solid #fff;border-left:1px solid #fff;border-right:1px solid #3e3e3d;border-bottom:1px solid #3e3e3d"><div class="a" style="left:0;top:0;right:0;bottom:0;border-top:1px solid #ecebea;border-left:1px solid #ecebea;border-right:1px solid #7f7e7d;border-bottom:1px solid #7f7e7d"></div></div>
<div class="a" style="left:308px;top:131px;width:152px;height:19px;border-top:1px solid #fff;border-left:1px solid #fff;border-radius:3px 0 0 0"></div>
<div class="a" style="left:641px;top:131px;width:142px;height:19px;border-top:1px solid #fff;border-radius:0 2px 0 0"></div>
<div class="a" style="left:781px;top:132px;width:1px;height:18px;background:#7f7e7d"></div>
<div class="a" style="left:782px;top:133px;width:1px;height:17px;background:#3e3e3d"></div>
<div class="a" style="left:460px;top:129px;width:181px;height:22px;background:#e0dfde;border-top:1px solid #fff;border-left:1px solid #fff;border-radius:3px 2px 0 0"></div>
<div class="a" style="left:639px;top:130px;width:1px;height:21px;background:#4a4a49"></div>
<div class="a" style="left:640px;top:131px;width:1px;height:20px;background:#3e3e3d"></div>
<div class="a" style="left:461px;top:150px;width:178px;height:2px;background:#e0dfde"></div>
<div class="t" style="left:317.85px;top:134.85px;letter-spacing:0.122px;">Ultimate Limit States</div>
<div class="t" style="left:471.50px;top:133.85px;letter-spacing:0.033px;">Serviceability Limit States</div>
<div class="t" style="left:653.83px;top:134.85px;letter-spacing:0.351px;">Construction stage</div>
<div class="t" style="left:330.43px;top:176.85px;letter-spacing:0.164px;">Combinations:</div>
<svg style="left:425px;top:178px" width="12" height="12" viewBox="0 0 12 12"><circle cx="6" cy="6" r="5" fill="#fff"/><path d="M1.800 9.500 A5.200 5.200 0 0 1 9.800 2.200" fill="none" stroke="#484848" stroke-width="1.800"/><path d="M2.500 10 A5.300 5.300 0 0 0 10.200 2.500" fill="none" stroke="#fff" stroke-width="1.300"/><circle cx="6" cy="6" r="2" fill="#000"/></svg>
<div class="t" style="left:443.54px;top:176.85px;letter-spacing:0.285px;">characteristic</div>
<svg style="left:540px;top:178px" width="12" height="12" viewBox="0 0 12 12"><circle cx="6" cy="6" r="5" fill="#fff"/><path d="M1.800 9.500 A5.200 5.200 0 0 1 9.800 2.200" fill="none" stroke="#484848" stroke-width="1.800"/><path d="M2.500 10 A5.300 5.300 0 0 0 10.200 2.500" fill="none" stroke="#fff" stroke-width="1.300"/></svg>
<div class="t" style="left:558.32px;top:176.85px;letter-spacing:0.296px;">frequent</div>
<div class="a" style="left:319px;top:211px;width:776px;height:159px;border:1px solid #7f7e7d;box-shadow:1px 1px 0 #fff, inset 1px 1px 0 #fff"></div>
<div class="a" style="left:331px;top:230px;width:13px;height:13px;background:#fff;border-top:1px solid #7f7e7d;border-left:1px solid #7f7e7d;border-right:1px solid #fff;border-bottom:1px solid #fff"><div class="a" style="left:0;top:0;right:0;bottom:0;border-left:1px solid #3e3e3d;border-top:1px solid #3e3e3d;border-right:1px solid #eeedec;border-bottom:1px solid #eeedec"></div></div>
<div class="t" style="left:349.73px;top:229.85px;letter-spacing:-0.144px;">Comb n'1</div>
<div class="a" style="left:639px;top:223px;width:80px;height:28px;background:#fff;border-top:1px solid #7f7e7d;border-left:1px solid #7f7e7d;border-right:1px solid #fff;border-bottom:1px solid #fff"><div class="a" style="left:0;top:0;right:0;bottom:0;border-left:1px solid #3e3e3d;border-top:1px solid #3e3e3d;border-right:1px solid #eeedec;border-bottom:1px solid #eeedec"></div></div>
<div class="t" style="left:644.09px;top:230.85px;letter-spacing:0.347px;">1.00000</div>
<div class="a" style="left:763px;top:223px;width:80px;height:28px;background:#fff;border-top:1px solid #7f7e7d;border-left:1px solid #7f7e7d;border-right:1px solid #fff;border-bottom:1px solid #fff"><div class="a" style="left:0;top:0;right:0;bottom:0;border-left:1px solid #3e3e3d;border-top:1px solid #3e3e3d;border-right:1px solid #eeedec;border-bottom:1px solid #eeedec"></div></div>
<div class="t" style="left:768.09px;top:230.85px;letter-spacing:0.347px;">1.00000</div>
<div class="a" style="left:936px;top:223px;width:80px;height:28px;background:#fff;border-top:1px solid #7f7e7d;border-left:1px solid #7f7e7d;border-right:1px solid #fff;border-bottom:1px solid #fff"><div class="a" style="left:0;top:0;right:0;bottom:0;border-left:1px solid #3e3e3d;border-top:1px solid #3e3e3d;border-right:1px solid #eeedec;border-bottom:1px solid #eeedec"></div></div>
<div class="t" style="left:941.60px;top:230.85px;letter-spacing:0.261px;">0.00000</div>
<div class="t" style="left:725.62px;top:230.24px;font-size:15.5px;-webkit-text-stroke:0.45px #000;">G</div>
<div class="t" style="left:745.37px;top:230.28px;font-size:14.5px;-webkit-text-stroke:0.55px #000;">+</div>
<div class="t" style="left:848.31px;top:231.23px;font-size:21px;font-family:'DejaVu Math TeX Gyre','DejaVu Serif','Liberation Serif',serif;">ψ</div>
<div class="a" style="left:855.85px;top:246.5px;width:1.25px;height:3.4px;background:#1a1a1a"></div>
<div class="t" style="left:865.26px;top:236.31px;font-size:13px;font-family:'Liberation Serif','DejaVu Serif',serif;">1,1</div>
<div class="t" style="left:885.29px;top:233.46px;font-size:16px;-webkit-text-stroke:0.55px #000;">Q</div>
<div class="t" style="left:898.67px;top:236.54px;font-size:10px;font-weight:bold;">1</div>
<div class="t" style="left:918.40px;top:233.46px;font-size:16px;-webkit-text-stroke:0.55px #000;">+</div>
<div class="t" style="left:1021.31px;top:231.23px;font-size:21px;font-family:'DejaVu Math TeX Gyre','DejaVu Serif','Liberation Serif',serif;">ψ</div>
<div class="a" style="left:1028.85px;top:246.5px;width:1.25px;height:3.4px;background:#1a1a1a"></div>
<div class="t" style="left:1038.82px;top:236.31px;font-size:13px;font-family:'Liberation Serif','DejaVu Serif',serif;">2,2</div>
<div class="t" style="left:1058.29px;top:233.46px;font-size:16px;-webkit-text-stroke:0.55px #000;">Q</div>
<div class="t" style="left:1072.00px;top:236.54px;font-size:10px;font-weight:bold;">2</div>
<div class="a" style="left:331px;top:265px;width:13px;height:13px;background:#fff;border-top:1px solid #7f7e7d;border-left:1px solid #7f7e7d;border-right:1px solid #fff;border-bottom:1px solid #fff"><div class="a" style="left:0;top:0;right:0;bottom:0;border-left:1px solid #3e3e3d;border-top:1px solid #3e3e3d;border-right:1px solid #eeedec;border-bottom:1px solid #eeedec"></div></div>
<div class="t" style="left:349.73px;top:264.85px;letter-spacing:-0.130px;">Comb n'2</div>
<div class="a" style="left:639px;top:258px;width:80px;height:28px;background:#fff;border-top:1px solid #7f7e7d;border-left:1px solid #7f7e7d;border-right:1px solid #fff;border-bottom:1px solid #fff"><div class="a" style="left:0;top:0;right:0;bottom:0;border-left:1px solid #3e3e3d;border-top:1px solid #3e3e3d;border-right:1px solid #eeedec;border-bottom:1px solid #eeedec"></div></div>
<div class="t" style="left:644.09px;top:265.85px;letter-spacing:0.347px;">1.00000</div>
<div class="a" style="left:763px;top:258px;width:80px;height:28px;background:#fff;border-top:1px solid #7f7e7d;border-left:1px solid #7f7e7d;border-right:1px solid #fff;border-bottom:1px solid #fff"><div class="a" style="left:0;top:0;right:0;bottom:0;border-left:1px solid #3e3e3d;border-top:1px solid #3e3e3d;border-right:1px solid #eeedec;border-bottom:1px solid #eeedec"></div></div>
<div class="t" style="left:768.09px;top:265.85px;letter-spacing:0.347px;">1.00000</div>
<div class="a" style="left:936px;top:258px;width:80px;height:28px;background:#fff;border-top:1px solid #7f7e7d;border-left:1px solid #7f7e7d;border-right:1px solid #fff;border-bottom:1px solid #fff"><div class="a" style="left:0;top:0;right:0;bottom:0;border-left:1px solid #3e3e3d;border-top:1px solid #3e3e3d;border-right:1px solid #eeedec;border-bottom:1px solid #eeedec"></div></div>
<div class="t" style="left:941.60px;top:265.85px;letter-spacing:0.261px;">0.00000</div>
<div class="t" style="left:725.62px;top:265.24px;font-size:15.5px;-webkit-text-stroke:0.45px #000;">G</div>
<div class="t" style="left:745.37px;top:265.28px;font-size:14.5px;-webkit-text-stroke:0.55px #000;">+</div>
<div class="t" style="left:848.31px;top:266.23px;font-size:21px;font-family:'DejaVu Math TeX Gyre','DejaVu Serif','Liberation Serif',serif;">ψ</div>
<div class="a" style="left:855.85px;top:281.5px;width:1.25px;height:3.4px;background:#1a1a1a"></div>
<div class="t" style="left:865.82px;top:271.31px;font-size:13px;font-family:'Liberation Serif','DejaVu Serif',serif;">2,1</div>
<div class="t" style="left:885.29px;top:268.46px;font-size:16px;-webkit-text-stroke:0.55px #000;">Q</div>
<div class="t" style="left:898.67px;top:271.54px;font-size:10px;font-weight:bold;">1</div>
<div class="t" style="left:918.40px;top:268.46px;font-size:16px;-webkit-text-stroke:0.55px #000;">+</div>
<div class="t" style="left:1021.31px;top:266.23px;font-size:21px;font-family:'DejaVu Math TeX Gyre','DejaVu Serif','Liberation Serif',serif;">ψ</div>
<div class="a" style="left:1028.85px;top:281.5px;width:1.25px;height:3.4px;background:#1a1a1a"></div>
<div class="t" style="left:1038.26px;top:271.31px;font-size:13px;font-family:'Liberation Serif','DejaVu Serif',serif;">1,2</div>
<div class="t" style="left:1058.29px;top:268.46px;font-size:16px;-webkit-text-stroke:0.55px #000;">Q</div>
<div class="t" style="left:1072.00px;top:271.54px;font-size:10px;font-weight:bold;">2</div>
<div class="a" style="left:331px;top:300px;width:13px;height:13px;background:#fff;border-top:1px solid #7f7e7d;border-left:1px solid #7f7e7d;border-right:1px solid #fff;border-bottom:1px solid #fff"><div class="a" style="left:0;top:0;right:0;bottom:0;border-left:1px solid #3e3e3d;border-top:1px solid #3e3e3d;border-right:1px solid #eeedec;border-bottom:1px solid #eeedec"></div></div>
<div class="t" style="left:349.73px;top:299.85px;letter-spacing:-0.164px;">Comb n'3</div>
<div class="a" style="left:639px;top:293px;width:80px;height:28px;background:#fff;border-top:1px solid #7f7e7d;border-left:1px solid #7f7e7d;border-right:1px solid #fff;border-bottom:1px solid #fff"><div class="a" style="left:0;top:0;right:0;bottom:0;border-left:1px solid #3e3e3d;border-top:1px solid #3e3e3d;border-right:1px solid #eeedec;border-bottom:1px solid #eeedec"></div></div>
<div class="t" style="left:644.09px;top:300.85px;letter-spacing:0.347px;">1.00000</div>
<div class="a" style="left:763px;top:293px;width:80px;height:28px;background:#fff;border-top:1px solid #7f7e7d;border-left:1px solid #7f7e7d;border-right:1px solid #fff;border-bottom:1px solid #fff"><div class="a" style="left:0;top:0;right:0;bottom:0;border-left:1px solid #3e3e3d;border-top:1px solid #3e3e3d;border-right:1px solid #eeedec;border-bottom:1px solid #eeedec"></div></div>
<div class="t" style="left:768.09px;top:300.85px;letter-spacing:0.347px;">1.00000</div>
<div class="a" style="left:936px;top:293px;width:80px;height:28px;background:#fff;border-top:1px solid #7f7e7d;border-left:1px solid #7f7e7d;border-right:1px solid #fff;border-bottom:1px solid #fff"><div class="a" style="left:0;top:0;right:0;bottom:0;border-left:1px solid #3e3e3d;border-top:1px solid #3e3e3d;border-right:1px solid #eeedec;border-bottom:1px solid #eeedec"></div></div>
<div class="t" style="left:941.09px;top:300.85px;letter-spacing:0.347px;">1.00000</div>
<div class="t" style="left:725.62px;top:300.24px;font-size:15.5px;-webkit-text-stroke:0.45px #000;">G</div>
<div class="t" style="left:745.37px;top:300.28px;font-size:14.5px;-webkit-text-stroke:0.55px #000;">+</div>
<div class="t" style="left:848.31px;top:301.23px;font-size:21px;font-family:'DejaVu Math TeX Gyre','DejaVu Serif','Liberation Serif',serif;">ψ</div>
<div class="a" style="left:855.85px;top:316.5px;width:1.25px;height:3.4px;background:#1a1a1a"></div>
<div class="t" style="left:865.26px;top:306.31px;font-size:13px;font-family:'Liberation Serif','DejaVu Serif',serif;">1,1</div>
<div class="t" style="left:885.29px;top:303.46px;font-size:16px;-webkit-text-stroke:0.55px #000;">Q</div>
<div class="t" style="left:898.67px;top:306.54px;font-size:10px;font-weight:bold;">1</div>
<div class="t" style="left:918.40px;top:303.46px;font-size:16px;-webkit-text-stroke:0.55px #000;">+</div>
<div class="t" style="left:1021.31px;top:301.23px;font-size:21px;font-family:'DejaVu Math TeX Gyre','DejaVu Serif','Liberation Serif',serif;">ψ</div>
<div class="a" style="left:1028.85px;top:316.5px;width:1.25px;height:3.4px;background:#1a1a1a"></div>
<div class="t" style="left:1038.82px;top:306.31px;font-size:13px;font-family:'Liberation Serif','DejaVu Serif',serif;">2,2</div>
<div class="t" style="left:1058.29px;top:303.46px;font-size:16px;-webkit-text-stroke:0.55px #000;">Q</div>
<div class="t" style="left:1072.00px;top:306.54px;font-size:10px;font-weight:bold;">2</div>
<div class="a" style="left:331px;top:335px;width:13px;height:13px;background:#fff;border-top:1px solid #7f7e7d;border-left:1px solid #7f7e7d;border-right:1px solid #fff;border-bottom:1px solid #fff"><div class="a" style="left:0;top:0;right:0;bottom:0;border-left:1px solid #3e3e3d;border-top:1px solid #3e3e3d;border-right:1px solid #eeedec;border-bottom:1px solid #eeedec"></div></div>
<div class="t" style="left:349.73px;top:334.85px;letter-spacing:-0.206px;">Comb n'4</div>
<div class="a" style="left:639px;top:328px;width:80px;height:28px;background:#fff;border-top:1px solid #7f7e7d;border-left:1px solid #7f7e7d;border-right:1px solid #fff;border-bottom:1px solid #fff"><div class="a" style="left:0;top:0;right:0;bottom:0;border-left:1px solid #3e3e3d;border-top:1px solid #3e3e3d;border-right:1px solid #eeedec;border-bottom:1px solid #eeedec"></div></div>
<div class="t" style="left:644.09px;top:335.85px;letter-spacing:0.347px;">1.00000</div>
<div class="a" style="left:763px;top:328px;width:80px;height:28px;background:#fff;border-top:1px solid #7f7e7d;border-left:1px solid #7f7e7d;border-right:1px solid #fff;border-bottom:1px solid #fff"><div class="a" style="left:0;top:0;right:0;bottom:0;border-left:1px solid #3e3e3d;border-top:1px solid #3e3e3d;border-right:1px solid #eeedec;border-bottom:1px solid #eeedec"></div></div>
<div class="t" style="left:768.09px;top:335.85px;letter-spacing:0.347px;">1.00000</div>
<div class="a" style="left:936px;top:328px;width:80px;height:28px;background:#fff;border-top:1px solid #7f7e7d;border-left:1px solid #7f7e7d;border-right:1px solid #fff;border-bottom:1px solid #fff"><div class="a" style="left:0;top:0;right:0;bottom:0;border-left:1px solid #3e3e3d;border-top:1px solid #3e3e3d;border-right:1px solid #eeedec;border-bottom:1px solid #eeedec"></div></div>
<div class="t" style="left:941.09px;top:335.85px;letter-spacing:0.347px;">1.00000</div>
<div class="t" style="left:725.62px;top:335.24px;font-size:15.5px;-webkit-text-stroke:0.45px #000;">G</div>
<div class="t" style="left:745.37px;top:335.28px;font-size:14.5px;-webkit-text-stroke:0.55px #000;">+</div>
<div class="t" style="left:848.31px;top:336.23px;font-size:21px;font-family:'DejaVu Math TeX Gyre','DejaVu Serif','Liberation Serif',serif;">ψ</div>
<div class="a" style="left:855.85px;top:351.5px;width:1.25px;height:3.4px;background:#1a1a1a"></div>
<div class="t" style="left:865.82px;top:341.31px;font-size:13px;font-family:'Liberation Serif','DejaVu Serif',serif;">2,1</div>
<div class="t" style="left:885.29px;top:338.46px;font-size:16px;-webkit-text-stroke:0.55px #000;">Q</div>
<div class="t" style="left:898.67px;top:341.54px;font-size:10px;font-weight:bold;">1</div>
<div class="t" style="left:918.40px;top:338.46px;font-size:16px;-webkit-text-stroke:0.55px #000;">+</div>
<div class="t" style="left:1021.31px;top:336.23px;font-size:21px;font-family:'DejaVu Math TeX Gyre','DejaVu Serif','Liberation Serif',serif;">ψ</div>
<div class="a" style="left:1028.85px;top:351.5px;width:1.25px;height:3.4px;background:#1a1a1a"></div>
<div class="t" style="left:1038.26px;top:341.31px;font-size:13px;font-family:'Liberation Serif','DejaVu Serif',serif;">1,2</div>
<div class="t" style="left:1058.29px;top:338.46px;font-size:16px;-webkit-text-stroke:0.55px #000;">Q</div>
<div class="t" style="left:1072.00px;top:341.54px;font-size:10px;font-weight:bold;">2</div>
<div class="a" style="left:306px;top:390px;width:75px;height:25px;background:#e8e7e5;border-top:1px solid #fff;border-left:1px solid #fff;border-right:1px solid #3e3e3d;border-bottom:1px solid #3e3e3d;"><div class="a" style="left:0;top:0;right:0;bottom:0;border-top:1px solid #f3f2f1;border-left:1px solid #f3f2f1;border-right:1px solid #7f7e7d;border-bottom:1px solid #7f7e7d"></div></div>
<div class="a" style="left:387px;top:390px;width:75px;height:25px;background:#e8e7e5;border-top:1px solid #fff;border-left:1px solid #fff;border-right:1px solid #3e3e3d;border-bottom:1px solid #3e3e3d;"><div class="a" style="left:0;top:0;right:0;bottom:0;border-top:1px solid #f3f2f1;border-left:1px solid #f3f2f1;border-right:1px solid #7f7e7d;border-bottom:1px solid #7f7e7d"></div></div>
<div class="a" style="left:309px;top:393px;width:69px;height:19px;border:1px dotted #000"></div>
<div class="t" style="left:329.63px;top:395.85px;letter-spacing:0.548px;text-underline-offset:2px;"><u>P</u>rev</div>
<div class="t" style="left:411.03px;top:395.85px;letter-spacing:-0.167px;text-underline-offset:2px;"><u>N</u>ext</div>
<div class="a" style="left:4px;top:737px;width:1109px;height:67px;border-top:2px solid #7f7e7d;border-left:1px solid #7f7e7d;border-right:1px solid #fff;border-bottom:1px solid #fff"></div>
<div class="a" style="left:5px;top:739px;width:1px;height:64px;background:#eceae8"></div>
<div class="a" style="left:6px;top:795px;width:1105px;height:1px;background:#eeecea"></div>
<div class="a" style="left:6px;top:739px;width:1105px;height:32px;border-left:1px solid #7f7e7d;border-right:1px solid #fff;border-bottom:1px solid #fff"></div>
<div class="t" style="left:9.69px;top:746.85px;font-weight:bold;letter-spacing:0.149px;">Info</div>
<div class="t" style="left:40.99px;top:746.85px;letter-spacing:0.255px;">: General project information</div>
<div class="a" style="left:6px;top:777px;width:1105px;height:18px;background:#142448"></div>
<div class="t" style="left:7.92px;top:777.54px;font-size:10px;letter-spacing:0.725px;color:#d4d4d4">L5B Version 0.3 © 2014 Cracow University of Technology</div>
<svg style="left:1118px;top:792px" width="13" height="13" viewBox="0 0 13 13"><g><path d="M2 12.500 L12.500 2 M6 12.500 L12.500 6 M10 12.500 L12.500 10" stroke="#fff" stroke-width="1.200"/><path d="M1 12.500 L12.500 1 M5 12.500 L12.500 5 M9 12.500 L12.500 9" stroke="#4e4e4e" stroke-width="1.300"/></g></svg>
</div>
</body></html>
